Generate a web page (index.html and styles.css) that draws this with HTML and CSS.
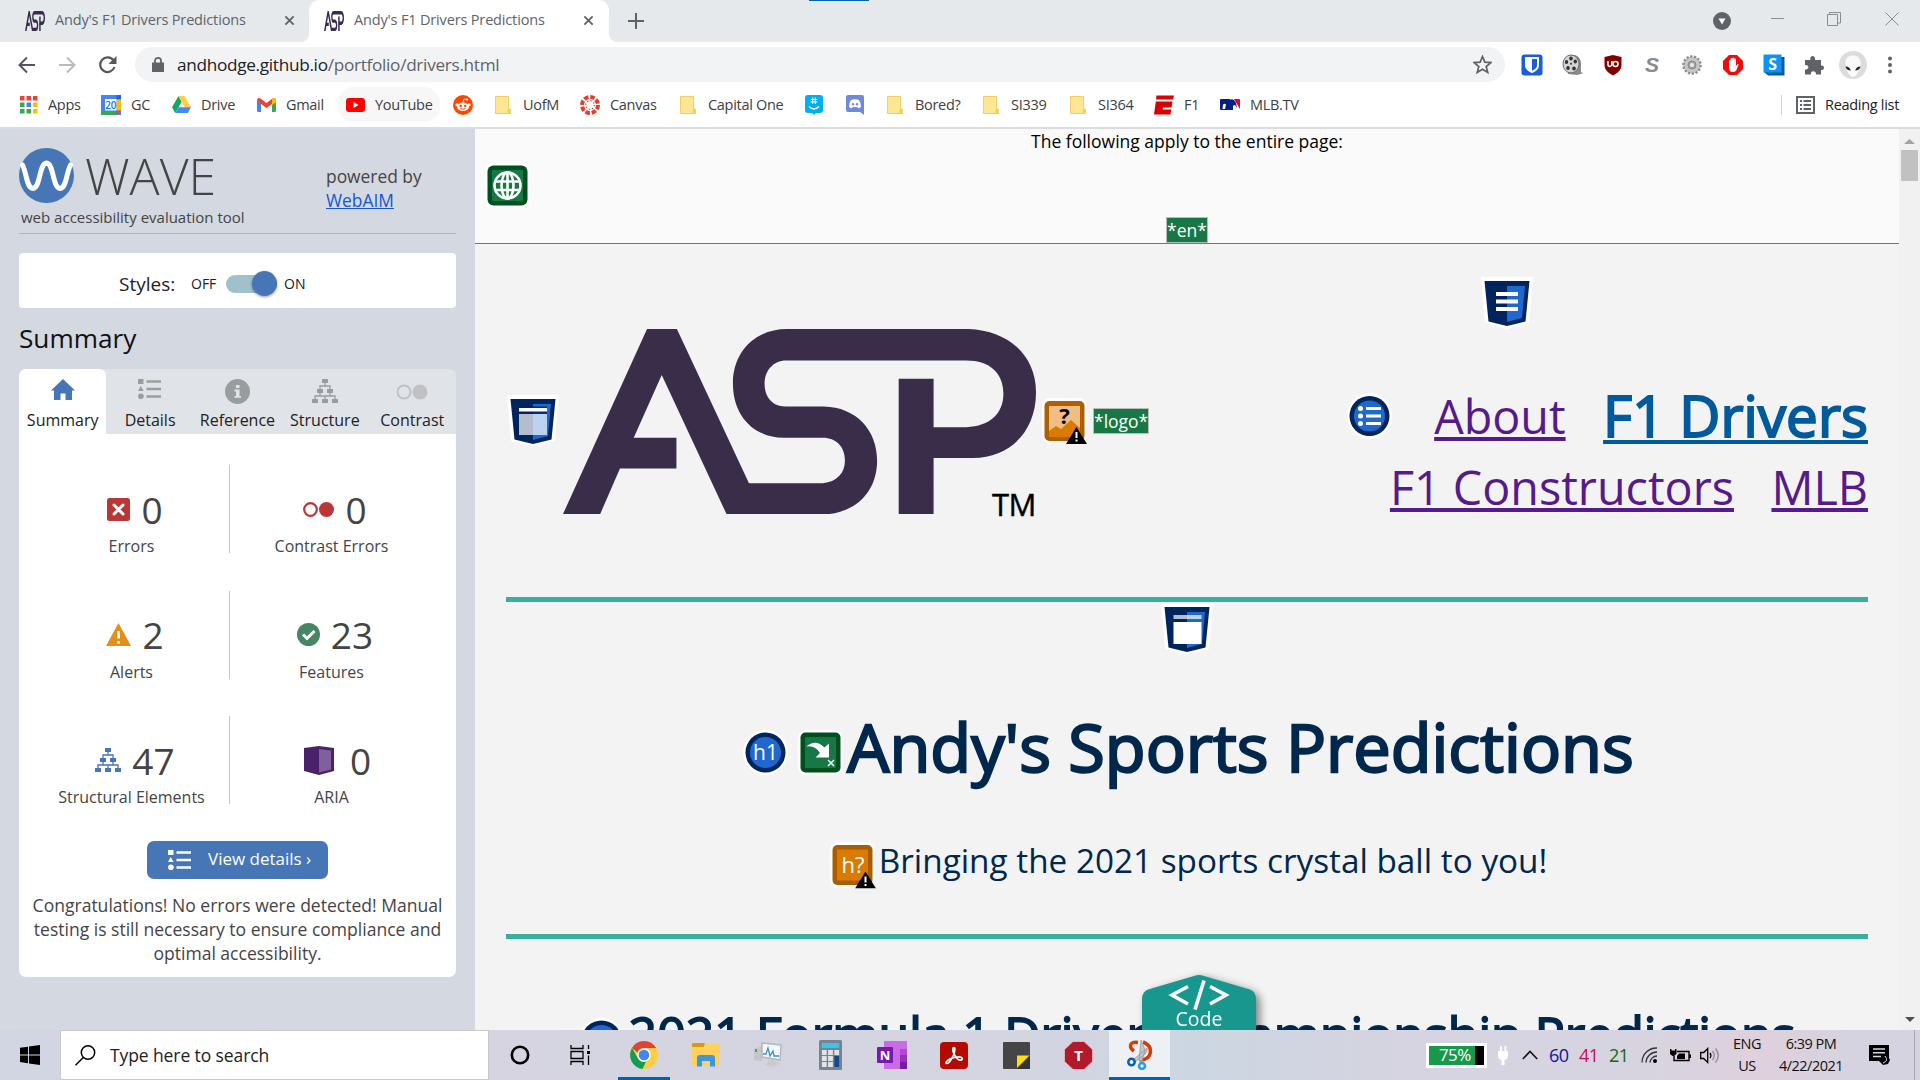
FILE: index.html
```html
<!DOCTYPE html>
<html lang="en">
<head>
<meta charset="utf-8">
<title>Andy's F1 Drivers Predictions</title>
<link rel="stylesheet" href="styles.css">
</head>
<body>
<svg class="defs" width="0" height="0" aria-hidden="true">
  <symbol id="asp" viewBox="202 628 1030 554" preserveAspectRatio="none"><path fill="#392d4a" d="M202 1182L385 628H450L607 1090H768C798 1086 816 1060 816 1022C816 980 796 954 768 954H682C615 952 572 885 572 791C572 697 620 628 690 628H1085C1170 632 1232 705 1232 818C1232 935 1175 1014 1095 1014H1009V1182H933V777H1009V922H1080C1132 920 1161 880 1161 822C1161 760 1132 722 1080 722H688C660 722 641 752 641 792C641 832 658 860 686 860H770C840 862 886 930 886 1022C886 1110 845 1172 782 1182H558L417 766L356 954H449V1046H326L283 1182Z"/></symbol>
  <symbol id="folder" viewBox="0 0 20 20"><path fill="#ffe694" stroke="#f3cf5f" d="M2.500 1.500h13v12l2 1v4h-15z"/><path fill="#f6cf55" d="M15 13l2.500 1v5h-3z"/></symbol>
  <symbol id="list" viewBox="0 0 24 20"><path d="M0 0h5.500v5H0zM2.700 7l3 5H0zM8.500 1.300H23v2.500H8.500zM8.500 8.800H23v2.500H8.500zM8.500 16.300H23v2.500H8.500z"/><circle cx="2.900" cy="17.200" r="2.800"/></symbol>
  <symbol id="tree" viewBox="0 0 26 24"><path d="M10 0h6v4h-6zM5 10h6v4H5zM15 10h6v4h-6zM0 20h6v4H0zM10 20h6v4h-6zM20 20h6v4h-6z"/><path fill="none" stroke="currentColor" stroke-width="1.300" d="M13 4v3M8 10V7h10v3M8 14v3M18 14v3M3 20v-3h20v3M13 17v3"/></symbol>
  <symbol id="shield" viewBox="0 0 52 52"><path fill="#fff" d="M0 0h52l-4 46-22 6-22-6z"/><path fill="#00245d" d="M3.500 4h45l-4 40.500L26 49 7.500 44.500z"/><path fill="#1f69ce" d="M26 9h18l-3 32-15 4z"/></symbol>
  <symbol id="warn" viewBox="0 0 21 17"><path d="M10.500 0L21 17H0z"/><path fill="#fff" d="M9.500 5h2v6h-2zM9.500 12.500h2v2h-2z"/></symbol>
  <symbol id="x" viewBox="0 0 12 12"><path fill="none" stroke="#5f6368" stroke-width="2" d="M1.500 1.500l9 9M10.500 1.500l-9 9"/></symbol>
</svg>

<div class="tabstrip">
  <div class="tab">
    <svg class="fav"><use href="#asp"/></svg><span>Andy's F1 Drivers Predictions</span><svg class="close"><use href="#x"/></svg>
  </div>
  <div class="tab active">
    <svg class="fav"><use href="#asp"/></svg><span>Andy's F1 Drivers Predictions</span><svg class="close"><use href="#x"/></svg>
  </div>
  <svg class="plus" viewBox="0 0 16 16"><path stroke="#5f6368" stroke-width="2" d="M8 0v16M0 8h16"/></svg>
  <div class="winbar"></div>
  <div class="winctl">
    <svg width="18" height="18" viewBox="0 0 18 18"><circle cx="9" cy="9" r="9" fill="#5f6368"/><path fill="#fff" d="M5.500 6.500h7L9 12.500z"/></svg>
    <svg width="14" height="14" viewBox="0 0 14 14"><path stroke="#8b8d90" d="M0 6.500h13"/></svg>
    <svg width="14" height="14" viewBox="0 0 14 14"><path fill="none" stroke="#8b8d90" d="M.5 2.500h10v11H.5zM2.500 2.500v-2h11v10.500h-3"/></svg>
    <svg width="14" height="14" viewBox="0 0 14 14"><path fill="none" stroke="#8b8d90" d="M.5.5l13 13M13.500.5l-13 13"/></svg>
  </div>
</div>

<div class="toolbar">
  <div class="navbtns">
    <svg width="18" height="18" viewBox="0 0 18 18"><path fill="none" stroke="#54585d" stroke-width="2" d="M17 9H2M9 1.500L1.500 9 9 16.500"/></svg>
    <svg width="18" height="18" viewBox="0 0 18 18"><path fill="none" stroke="#b9bbbe" stroke-width="2" d="M1 9h15M9 1.500L16.500 9 9 16.500"/></svg>
    <svg width="19" height="18" viewBox="0 0 19 18"><path fill="none" stroke="#54585d" stroke-width="2.200" d="M15.500 4.500A7.300 7.300 0 1 0 16.500 11"/><path fill="#54585d" d="M18.500 0v8h-8z"/></svg>
  </div>
  <div class="omnibox">
    <svg width="12" height="15" viewBox="0 0 12 15"><path fill="#5f6368" d="M0 5.500h12V15H0z"/><path fill="none" stroke="#5f6368" stroke-width="1.800" d="M3 6V3.500a3 2.600 0 0 1 6 0V6"/></svg>
    <span class="url"><b>andhodge.github.io</b>/portfolio/drivers.html</span>
    <svg class="star" width="19" height="19" viewBox="0 0 19 19"><path fill="none" stroke="#5f6368" stroke-width="1.700" d="M9.500 1.500l2.300 5.600 6 .5-4.600 3.900 1.500 5.900-5.200-3.200-5.200 3.200 1.500-5.900L1.200 7.600l6-.5z"/></svg>
  </div>
  <div class="exts">
    <svg width="22" height="22" viewBox="0 0 22 22"><rect width="21" height="21" x=".5" y=".5" rx="3" fill="#175ddc"/><path fill="#fff" d="M4 3h14v8.500c0 3.500-3.500 6-7 7.500-3.500-1.500-7-4-7-7.500z"/><path fill="#175ddc" d="M11 5h5v6.500c0 2.500-2.500 4-5 5.300z"/></svg>
    <svg width="22" height="22" viewBox="0 0 22 22"><path fill="#8a8a8a" d="M9 1h4q6 2 6 9v8l2 1.500-6 1.500-9-1z"/><ellipse cx="9" cy="10" rx="8" ry="9" fill="#d4d4d4" stroke="#6a6a6a"/><g fill="#333"><ellipse cx="9" cy="4.500" rx="1.800" ry="2"/><ellipse cx="4.500" cy="8" rx="1.700" ry="2"/><ellipse cx="13.300" cy="7.500" rx="1.700" ry="2"/><ellipse cx="6" cy="14" rx="1.800" ry="2"/><ellipse cx="12" cy="14.500" rx="1.800" ry="2"/><circle cx="9" cy="9.800" r="1"/></g></svg>
    <svg width="20" height="22" viewBox="0 0 20 22"><path fill="#800000" d="M10 1l8.500 2v8c0 5-4 8-8.500 10.500C5.500 19 1.500 16 1.500 11V3z"/><path fill="none" stroke="#fff" stroke-width="1.500" d="M5 7v3.500a1.800 1.800 0 0 0 3.800 0V7"/><circle cx="12.500" cy="10" r="2.500" fill="none" stroke="#fff" stroke-width="1.500"/></svg>
    <i class="ext-s">S</i>
    <svg width="22" height="22" viewBox="0 0 22 22"><circle cx="11" cy="11" r="8.500" fill="#bdbdbd" stroke="#8d8d8d" stroke-width="2.600" stroke-dasharray="2.200 1.600"/><circle cx="11" cy="11" r="7.500" fill="#c6c6c6"/><circle cx="11" cy="11" r="4" fill="#a5a5a5" stroke="#888"/><circle cx="11" cy="11" r="2" fill="#eee"/></svg>
    <svg width="22" height="22" viewBox="0 0 22 22"><path fill="#f00b0b" d="M7 1h8l6 6v8l-6 6H7l-6-6V7z"/><path fill="#fff" d="M7 12V6.500q.8-1 1.600 0V10V4.500q.9-1 1.800 0V10V4q.9-1 1.800 0v6V5q.9-1 1.800 0v7l1.500-2q1.500-.3 1 1l-2.500 6q-4 2-6 0-1-2-1-5z"/></svg>
    <svg width="22" height="22" viewBox="0 0 22 22"><path fill="#075a9e" d="M3 3h18.500v18.500H5L1 18z"/><path fill="#0a94f6" d="M.5.500h18v18H.5z"/><text x="9.600" y="15.500" text-anchor="middle" font-size="16" font-weight="700" fill="#fff">S</text></svg>
    <svg width="20" height="22" viewBox="0 0 20 22"><path fill="#5f6368" d="M1 6h5.500C5 1.500 11.500 0 11 6h6v5.500c4-1 4 5.500 0 4.500v4.500h-5c.5-4.500-6-4.500-5 0H1v-5c4.500.5 4.500-5 0-4.500z"/></svg>
    <svg width="28" height="28" viewBox="0 0 28 28"><circle cx="14" cy="14" r="14" fill="#dcdcdc"/><path fill="#fafafa" d="M14 4.500c6 0 8.500 5 7.500 9.500-1 6-4.500 12-7.500 12S7.500 20 6.500 14C5.500 9.500 8 4.500 14 4.500z"/><path fill="#222" d="M6.500 15.500c2.800 0 4.500 1.500 5.300 4-2.800 0-4.800-1.500-5.300-4zM21.500 15.500c-2.800 0-4.500 1.500-5.300 4 2.800 0 4.800-1.500 5.300-4z"/></svg>
    <svg width="6" height="18" viewBox="0 0 6 18"><g fill="#5f6368"><circle cx="3" cy="2.500" r="2"/><circle cx="3" cy="9" r="2"/><circle cx="3" cy="15.500" r="2"/></g></svg>
  </div>
</div>

<div class="bookmarks">
  <div class="bm"><svg width="18" height="18" viewBox="0 0 18 18"><path fill="#ea4335" d="M0 0h4.500v4.500H0zM6.500 0H11v4.500H6.500zM13 0h4.500v4.500H13z"/><path fill="#34a853" d="M0 6.500h4.500V11H0zM0 13h4.500v4.500H0zM6.500 13H11v4.500H6.500z"/><path fill="#4285f4" d="M6.500 6.500H11V11H6.500z"/><path fill="#fbbc04" d="M13 6.500h4.500V11H13zM13 13h4.500v4.500H13z"/></svg><span>Apps</span></div>
  <div class="bm"><svg width="20" height="20" viewBox="0 0 20 20"><path fill="#4285f4" d="M0 0h20v20H0z"/><path fill="#1967d2" d="M15.500 0H20v4.500h-4.500z"/><path fill="#fbbc04" d="M15.500 4.500H20v11h-4.500z"/><path fill="#34a853" d="M0 15.500h15.500V20H0z"/><path fill="#ea4335" d="M15.500 15.500H20L15.500 20z"/><path fill="#fff" d="M4 4h11.500v11.500H4z"/><text x="9.700" y="13.700" text-anchor="middle" font-size="10" fill="#1a73e8" font-weight="600">20</text></svg><span>GC</span></div>
  <div class="bm"><svg width="19" height="17" viewBox="0 0 19 17"><path fill="#11a861" d="M6.500 0L0 11.300 3.200 17 9.700 5.700z"/><path fill="#ffcf4a" d="M6.500 0h6L19 11.300h-6.300z"/><path fill="#4587f4" d="M6.400 11.300H19L15.800 17H3.200z"/></svg><span>Drive</span></div>
  <div class="bm"><svg width="19" height="14" viewBox="0 0 19 14"><path fill="#4285f4" d="M0 2l4 3v9H1.500Q0 14 0 12.500z"/><path fill="#34a853" d="M15 5l4-3v10.500q0 1.500-1.500 1.500H15z"/><path fill="#ea4335" d="M0 2Q.5-1 3.500.5l6 4.500 6-4.500Q18.500-1 19 2L15 6 9.500 10 4 6z"/><path fill="#fbbc04" d="M15 1q3.500-2.500 4 1v2.500L15 7z"/></svg><span>Gmail</span></div>
  <div class="bm hover"><svg width="19" height="14" viewBox="0 0 19 14"><rect width="19" height="14" rx="3" fill="#f00"/><path fill="#fff" d="M7.500 4v6l5-3z"/></svg><span>YouTube</span></div>
  <div class="bm"><svg width="20" height="20" viewBox="0 0 20 20"><circle cx="10" cy="10" r="10" fill="#ff4500"/><ellipse cx="10" cy="11.700" rx="6" ry="4.300" fill="#fff"/><circle cx="3.900" cy="9.800" r="1.500" fill="#fff"/><circle cx="16.100" cy="9.800" r="1.500" fill="#fff"/><path fill="none" stroke="#fff" d="M10 8l1-4 3 .7"/><circle cx="14" cy="4.500" r="1.100" fill="#fff"/><circle cx="7.700" cy="11" r="1.200" fill="#ff4500"/><circle cx="12.300" cy="11" r="1.200" fill="#ff4500"/><path fill="none" stroke="#ff4500" d="M7.500 13.500q2.500 1.600 5 0"/></svg></div>
  <div class="bm"><svg width="20" height="20"><use href="#folder"/></svg><span>UofM</span></div>
  <div class="bm"><svg width="20" height="20" viewBox="0 0 20 20"><circle cx="10" cy="10" r="8" fill="none" stroke="#e43c2e" stroke-width="4" stroke-dasharray="4.500 1.783"/><circle cx="10" cy="10" r="4.300" fill="none" stroke="#e43c2e" stroke-width="1.300" stroke-dasharray="1.200 2.177"/></svg><span>Canvas</span></div>
  <div class="bm"><svg width="20" height="20"><use href="#folder"/></svg><span>Capital One</span></div>
  <div class="bm"><svg width="18" height="20" viewBox="0 0 18 20"><path fill="#00aff0" d="M3 0h12q3 0 3 3v12q0 3-3 3h-4l-2 2-2-2H3q-3 0-3-3V3q0-3 3-3z"/><path fill="none" stroke="#fff" stroke-width="1.500" d="M4 11.500q5 5 10 0"/><path fill="none" stroke="#fff" d="M7.700 2.500v6.500M10.300 2.500v6.500M5.700 4.500h6.600M5.700 7h6.600"/></svg></div>
  <div class="bm"><svg width="18" height="20" viewBox="0 0 18 20"><path fill="#7289da" d="M2 0h14q2 0 2 2v18l-4-3H2q-2 0-2-2V2q0-2 2-2z"/><path fill="#fff" d="M5 5q4-1.500 8 0 2 3 2 7-2 1.500-3 1l-1-1H7l-1 1q-1 .5-3-1 0-4 2-7z"/><circle cx="7" cy="9.300" r="1.200" fill="#7289da"/><circle cx="11" cy="9.300" r="1.200" fill="#7289da"/></svg></div>
  <div class="bm"><svg width="20" height="20"><use href="#folder"/></svg><span>Bored?</span></div>
  <div class="bm"><svg width="20" height="20"><use href="#folder"/></svg><span>SI339</span></div>
  <div class="bm"><svg width="20" height="20"><use href="#folder"/></svg><span>SI364</span></div>
  <div class="bm"><svg width="20" height="20" viewBox="0 0 20 20"><path fill="#d00" d="M2.500.5H20l-1 4H2zM1.800 6.500H18.500l-1 6H9l-.3 2H17.300l-.8 5H0z"/></svg><span>F1</span></div>
  <div class="bm"><svg width="20" height="11" viewBox="0 0 20 11"><path fill="#041e8c" d="M1 0h9L8.500 11H1Q0 11 0 10V1Q0 0 1 0z"/><path fill="#e4002b" d="M14 0h5q1 0 1 1v9l-3-5z"/><path fill="#fff" d="M3 5.500q2-1.500 3 0L5 10H2.500z"/><path fill="#041e8c" d="M8 2q3-3 6-1l2 3 1 5-2-3-2 .5V11H7z"/></svg><span>MLB.TV</span></div>
  <div class="reading"><svg width="19" height="18" viewBox="0 0 19 18"><path fill="none" stroke="#5f6368" stroke-width="2" d="M1 1h17v16H1z"/><path stroke="#5f6368" stroke-width="1.800" d="M4 5h2M7.500 5H15M4 9h2M7.500 9H15M4 13h2M7.500 13H15"/></svg><span>Reading list</span></div>
</div>

<div class="content">
  <aside class="sidebar">
    <header class="brand">
      <div>
        <div class="logo-row">
          <svg width="55" height="55" viewBox="0 0 55 55"><circle cx="27.500" cy="27.500" r="27.500" fill="#4776b6"/><path fill="none" stroke="#fff" stroke-width="5" stroke-linecap="round" d="M3.500 17C8 26 7.500 40 14 40.500 21.500 40 20 15.500 27.500 15 35 15.500 33.500 40 41 40.500 47.500 40 47 26 51.500 17"/></svg>
          <span class="wave">WAVE</span>
        </div>
        <div class="tagline">web accessibility evaluation tool</div>
      </div>
      <p class="powered">powered by<br><a>WebAIM</a></p>
    </header>
    <div class="styles-card"><span class="lbl">Styles:</span><span class="off">OFF</span><span class="toggle"><i></i></span><span>ON</span></div>
    <h2>Summary</h2>
    <nav class="panel-tabs">
      <div class="pt on"><svg width="24" height="21" viewBox="0 0 24 21"><path d="M12 0L0 11.500h3V21h6.500v-6.500h5V21H21v-9.500h3L18 5.700"/></svg>Summary</div>
      <div class="pt"><svg width="24" height="20"><use href="#list"/></svg>Details</div>
      <div class="pt"><svg width="25" height="25" viewBox="0 0 25 25"><circle cx="12.500" cy="12.500" r="12.500"/><path fill="#e0e3e8" d="M11 6h3.500v3H11zM9.500 10.500h5V17H16v1.800H9.500V17H11v-4.500H9.500z"/></svg>Reference</div>
      <div class="pt"><svg width="26" height="24"><use href="#tree"/></svg>Structure</div>
      <div class="pt"><svg class="faint" width="32" height="16" viewBox="0 0 32 16"><circle cx="8" cy="8" r="6.500" fill="none" stroke="currentColor" stroke-width="2"/><circle cx="24" cy="8" r="7.500"/></svg>Contrast</div>
    </nav>
    <section class="panel">
      <div class="counts">
        <div class="count"><div><svg width="23" height="23" viewBox="0 0 23 23"><rect width="23" height="23" rx="2.500" fill="#b93737"/><path stroke="#fff" stroke-width="3" stroke-linecap="round" d="M7 7l9 9M16 7l-9 9"/></svg><b>0</b></div><p>Errors</p></div>
        <div class="count"><div><svg width="31" height="15" viewBox="0 0 31 15"><circle cx="7.500" cy="7.500" r="6.300" fill="none" stroke="#b93737" stroke-width="2.200"/><circle cx="23.500" cy="7.500" r="7.500" fill="#b93737"/></svg><b>0</b></div><p>Contrast Errors</p></div>
        <div class="count"><div><svg width="25" height="23" viewBox="0 0 25 23"><path fill="#e38f18" d="M12.500 0L25 23H0z"/><path fill="#fff" d="M11.300 8h2.600v7.500h-2.600zM11.300 18h2.600v2.600h-2.600z"/></svg><b>2</b></div><p>Alerts</p></div>
        <div class="count"><div><svg width="23" height="23" viewBox="0 0 23 23"><circle cx="11.500" cy="11.500" r="11.500" fill="#468664"/><path fill="none" stroke="#fff" stroke-width="3" d="M6 11.500l4 4L17.500 8"/></svg><b>23</b></div><p>Features</p></div>
        <div class="count"><div><svg class="blue" width="26" height="24"><use href="#tree"/></svg><b>47</b></div><p>Structural Elements</p></div>
        <div class="count aria"><div><svg width="30" height="29" viewBox="0 0 30 29"><path fill="#4a226c" d="M0 2L15 0l15 2v23l-15 4L0 25z"/><path fill="#7f5f9e" d="M15 3l12 1.500v19L15 26.500z"/></svg><b>0</b></div><p>ARIA</p></div>
      </div>
      <a class="btn"><svg width="24" height="20"><use href="#list"/></svg><span>View details ›</span></a>
      <p class="msg">Congratulations! No errors were detected! Manual testing is still necessary to ensure compliance and optimal accessibility.</p>
    </section>
  </aside>

  <main class="page">
    <div class="pagenote">
      <p>The following apply to the entire page:</p>
      <svg width="45" height="45" viewBox="0 0 45 45"><rect width="45" height="45" rx="8" fill="#fff"/><rect x="2.500" y="2.500" width="40" height="40" rx="6" fill="#00501f"/><rect x="7" y="7" width="31" height="31" rx="1" fill="#177845"/><g fill="none" stroke="#fff" stroke-width="2.600"><circle cx="22.500" cy="22.500" r="13"/><ellipse cx="22.500" cy="22.500" rx="6" ry="13"/><path d="M22.500 9.500v26M10.500 18.500h24M10.500 27h24"/></g></svg>
      <span class="tag">*en*</span>
    </div>
    <header class="masthead">
      <svg width="52" height="52" viewBox="0 0 52 52"><use href="#shield"/><path fill="#fff" opacity=".7" d="M12 19h28v21H12z"/><path fill="#00245d" opacity=".85" d="M12 11.500h28V19H12z"/><path fill="#fff" d="M12 13h28v3.500H12z"/></svg>
      <div class="asp"><svg width="473" height="185"><use href="#asp"/></svg><span>TM</span></div>
      <svg class="alt" width="45" height="50" viewBox="0 0 45 50"><rect width="45" height="46" rx="8" fill="#fff"/><rect x="2.500" y="3" width="40" height="40" rx="5" fill="#b05f00"/><path fill="#f0bd84" d="M7 8h31v31H7z"/><path fill="#db7a00" d="M7 33l7-5 5 3 10-9 9 8v9H7z"/><text x="22.500" y="26" font-size="22" font-weight="700" text-anchor="middle">?</text><use href="#warn" x="24" y="29" width="21" height="17"/></svg>
      <span class="tag">*logo*</span>
      <nav class="sitenav">
        <svg class="mark" width="52" height="52" viewBox="0 0 52 52"><use href="#shield"/><path fill="#fff" d="M15 15h22v4H15zM15 22.500h22v4H15zM15 30h22v4H15z"/></svg>
        <div class="navrow">
          <svg width="45" height="46" viewBox="0 0 45 46"><ellipse cx="22.500" cy="23" rx="22.500" ry="23" fill="#fff"/><circle cx="22.500" cy="23" r="20" fill="#00245d"/><circle cx="22.500" cy="23" r="15.500" fill="#1f69ce"/><path stroke="#fff" stroke-width="3" d="M19 15.500h15M19 23h15M19 30.500h15"/><g fill="#fff"><circle cx="13.500" cy="15.500" r="2.500"/><circle cx="13.500" cy="23" r="2.500"/><circle cx="13.500" cy="30.500" r="2.500"/></g></svg>
          <a>About</a><a class="current">F1 Drivers</a>
        </div>
        <div class="navrow two"><a>F1 Constructors</a><a>MLB</a></div>
      </nav>
    </header>
    <section class="hero">
      <svg width="52" height="52" viewBox="0 0 52 52"><use href="#shield"/><path fill="#fff" opacity=".7" d="M12.500 12h28v4h-28z"/><path fill="#fff" d="M12.500 19h28v22h-28z"/></svg>
      <div class="titlerow">
        <svg width="45" height="45" viewBox="0 0 45 45"><circle cx="22.500" cy="22.500" r="22.500" fill="#fff"/><circle cx="22.500" cy="22.500" r="20" fill="#00245d"/><circle cx="22.500" cy="22.500" r="15.500" fill="#1f69ce"/><text x="22.500" y="30" font-size="21" fill="#fff" text-anchor="middle">h1</text></svg>
        <svg width="45" height="45" viewBox="0 0 45 45"><rect width="45" height="45" rx="8" fill="#fff"/><rect x="2.500" y="2.500" width="40" height="40" rx="5" fill="#00501f"/><rect x="7" y="7" width="31" height="31" rx="1" fill="#177845"/><path fill="#fff" d="M8.500 16.500q9-8 18 1l4.500-4v14H17.500l4.500-4.500q-5-8-13.500-6.500z"/><path stroke="#fff" stroke-width="1.500" d="M30 30l6 6M36 30l-6 6"/></svg>
        <h1>Andy's Sports Predictions</h1>
      </div>
      <div class="subrow">
        <svg width="47" height="48" viewBox="0 0 47 48"><rect width="45" height="46" rx="8" fill="#fff"/><rect x="2.500" y="3" width="40" height="40" rx="5" fill="#a95c00"/><rect x="7" y="7.500" width="31" height="31" fill="#db7a00"/><text x="23" y="31" font-size="22" fill="#fff" text-anchor="middle">h?</text><use href="#warn" x="25" y="29.500" width="21" height="17"/></svg>
        <p>Bringing the 2021 sports crystal ball to you!</p>
      </div>
    </section>
    <section class="champ">
      <svg width="45" height="45" viewBox="0 0 45 45"><circle cx="22.500" cy="22.500" r="22.500" fill="#fff"/><circle cx="22.500" cy="22.500" r="20" fill="#00245d"/><circle cx="22.500" cy="22.500" r="15.500" fill="#1f69ce"/></svg>
      <h2>2021 Formula 1 Drivers Championship Predictions</h2>
    </section>
    <div class="code">
      <svg width="130" height="60" viewBox="0 0 130 60"><path fill="#18978f" d="M0 60V24q0-7 6-9.500L52 1q5-2 10 0l46 13.500q6 2.500 6 9.500v36z"/><path fill="none" stroke="#fff" stroke-width="3.600" d="M46 11.500L30 20l16 9M68 11.500L84 20l-16 9M62 5.500l-9 29"/></svg>
      <span>Code</span>
    </div>
  </main>
  <div class="scroll"><svg width="11" height="5" viewBox="0 0 11 5"><path fill="#a3a3a3" d="M5.500 0L11 5H0z"/></svg><div class="thumb"></div><svg class="down" width="10" height="5" viewBox="0 0 10 5"><path fill="#505050" d="M0 0h10L5 5z"/></svg></div>
</div>

<footer class="taskbar">
  <div class="start"><svg width="20" height="20" viewBox="0 0 20 20"><path d="M0 2.800l8-1.100v7.800H0zM9 1.500L20 0v9.500H9zM0 10.500h8v7.700l-8-1.100zM9 10.500h11V20L9 18.400z"/></svg></div>
  <div class="search"><svg width="21" height="21" viewBox="0 0 21 21"><circle cx="13" cy="7.500" r="6.700" fill="none" stroke="#000" stroke-width="1.500"/><path stroke="#000" stroke-width="1.500" d="M8.300 12.500L.5 20.300"/></svg><span>Type here to search</span></div>
  <div class="apps">
    <div><svg width="20" height="20" viewBox="0 0 20 20"><circle cx="10" cy="10" r="8.200" fill="none" stroke="#000" stroke-width="2.600"/></svg></div>
    <div class="views"><svg width="21" height="20" viewBox="0 0 21 20"><path fill="none" stroke="#000" stroke-width="1.300" d="M1 0v3.500h12V0M1 20v-3.500h12V20M1 6.500h12v7H1zM18.500 0v4M18.500 10.500V20"/><path d="M17 6h3v3h-3z"/></svg></div>
    <div class="run"><svg width="28" height="28" viewBox="0 0 28 28"><circle cx="14" cy="14" r="14" fill="#ffcd40"/><path fill="#db4437" d="M14 0a14 14 0 0 1 12.100 7H14a7 7 0 0 0-6.500 4.500L2 7A14 14 0 0 1 14 0z"/><path fill="#0f9d58" d="M2 7l6 10.500A7 7 0 0 0 16 20.500L12.500 28A14 14 0 0 1 2 7z"/><circle cx="14" cy="14" r="6.700" fill="#fff"/><circle cx="14" cy="14" r="5.300" fill="#4285f4"/></svg></div>
    <div><svg width="28" height="24" viewBox="0 0 28 24"><path fill="#d99a12" d="M0 1q0-1 1-1h11l1 1-1 3H0z"/><path fill="#ffd15c" d="M0 4h12l1-3h14.500v21.500H0z"/><path fill="#3d97dd" d="M5 23.500V15q0-3 3-3h12q3 0 3 3v8.500h-5V18h-8v5.500z"/></svg></div>
    <div><svg width="28" height="26" viewBox="0 0 28 26"><path fill="#c3c7ca" d="M0 7l8-3v15l-8-1z"/><path fill="#4aa354" d="M1 7h2v3H1z"/><path fill="#f4f7f8" stroke="#b3b8bc" stroke-width="1.500" d="M8 1L27 3l-1 15-18-3z"/><path fill="none" stroke="#3b91c8" stroke-width="1.300" d="M9 12h3l2-6 2 8 3-5 1 5h5"/><path fill="#c9cccd" d="M14 17l7 1 1 2 5 1-8 4-9-2 4-2z"/></svg></div>
    <div><svg width="23" height="30" viewBox="0 0 24 30" preserveAspectRatio="none"><rect width="24" height="30" rx="1.500" fill="#79838d"/><path fill="#35c6f2" d="M3 3h18v5H3z"/><path fill="#e1e5e8" d="M3 10h5v5H3zM9.500 10h5v5h-5zM16 10h5v5h-5zM3 16h5v5H3zM9.500 16h5v5h-5zM3 22h5v5H3zM9.500 22h5v5h-5z"/><path fill="#0f4a8c" d="M16 16h5v11h-5z"/></svg></div>
    <div><svg width="30" height="28" viewBox="0 0 30 28"><path fill="#cb6ce6" d="M7 0h16v28H7z"/><path fill="#ae4bd5" d="M23 0h7v28h-7z"/><path fill="#7719aa" d="M23 21h7v7h-7z"/><path fill="#9332bf" d="M23 14h7v7h-7z"/><path fill="#cb6ce6" d="M23 0h7v8h-7z"/><rect y="6" width="16" height="16" rx="1" fill="#7719aa"/><text x="8" y="18.500" font-size="13" font-weight="700" text-anchor="middle" fill="#fff">N</text></svg></div>
    <div><svg width="28" height="27" viewBox="0 0 28 27"><rect width="28" height="27" rx="4" fill="#b30b00"/><path fill="none" stroke="#fff" stroke-width="1.700" d="M14 5.500c-3 0 0 8 3 11s6 1.500 5-.5-8-1-12 1-5 4.500-3 4.500S14 14 14.500 10s.5-4.500-.5-4.500z"/></svg></div>
    <div><svg width="27" height="27" viewBox="0 0 27 27"><rect width="27" height="27" rx="1" fill="#454545"/><path fill="#ffde00" d="M14 26V13.500h12.500z"/><path fill="#333" d="M27 14v13H14z"/></svg></div>
    <div><svg width="29" height="29" viewBox="0 0 29 29"><path fill="#b11a2b" stroke="#e4c3ca" stroke-width=".8" d="M9 .5h11l8.500 8v12l-8.500 8H9l-8.500-8v-12z"/><text x="14.500" y="20" font-size="15" font-weight="700" text-anchor="middle" fill="#fff">T</text></svg></div>
    <div class="run current"><svg width="26" height="30" viewBox="0 0 26 30"><path fill="none" stroke="#d83b01" stroke-width="3.500" d="M11 2.500Q4 1.500 3.500 5.500 3 8 7 11M16 2q8 3 7.500 10-1 8-11 8"/><path fill="#c3c6c8" stroke="#8d9194" stroke-width=".7" d="M14 0l4 10-3 11-3-1zM20 8q1 4-3 7L8 22l-2-2z"/><circle cx="4.500" cy="22" r="3.200" fill="none" stroke="#0b5fb8" stroke-width="2.500"/><circle cx="15" cy="26" r="3" fill="none" stroke="#2a9be6" stroke-width="2.500"/></svg></div>
  </div>
  <div class="tray">
    <div class="batt"><span>75%</span></div>
    <svg class="plug" width="10" height="19" viewBox="0 0 10 19"><path fill="#fff" d="M2 0h1.800v5h2.700V0h1.800v5H10v5q0 3.500-3.500 4v5h-3v-5Q0 13.500 0 10V5h2z"/></svg>
    <svg class="chev" width="16" height="10" viewBox="0 0 16 10"><path fill="none" stroke="#111" stroke-width="1.600" d="M.8 9L8 1.500 15.200 9"/></svg>
    <span class="n n1">60</span><span class="n n2">41</span><span class="n n3">21</span>
    <svg class="wifi" width="17" height="16" viewBox="0 0 17 16"><g fill="none" stroke="#333" stroke-width="1.300"><path d="M1 15.500A14.500 14.500 0 0 1 16 1"/><path d="M5 15.500A11 11 0 0 1 16 5"/><path d="M9 15.500A7 7 0 0 1 16 9"/></g><circle cx="14" cy="14" r="2"/></svg>
    <svg class="pw" width="21" height="15" viewBox="0 0 21 15"><path fill="none" stroke="#000" stroke-width="1.400" d="M7 3.500h12v9H4V8"/><path d="M9 5.500h6v5.500H7V8zM19 6.500h2v3.500h-2zM0 1h1.500v2H0zM5 1h1.500v2H5zM0 2.500h6.500V6L4 8H2.500L0 6z"/></svg>
    <svg class="snd" width="21" height="17" viewBox="0 0 21 17"><path fill="none" stroke="#000" stroke-width="1.300" d="M.7 5.500h3l4-4v14l-4-4h-3z"/><path fill="none" stroke="#000" stroke-width="1.300" d="M10 6q1.800 2.500 0 5"/><path fill="none" stroke="#8d8b96" stroke-width="1.300" d="M12.500 4q3.500 4.500 0 9M15.500 1.500q5.500 7 0 14"/></svg>
    <p class="lang">ENG<br>US</p>
    <p class="clock">6:39 PM<br>4/22/2021</p>
    <svg class="note" width="21" height="20" viewBox="0 0 21 20"><path d="M0 0h20v13l1 2-2 4-5 1-4-4H0z"/><path stroke="#dcd4e0" stroke-width="1.600" d="M4 4h12M4 7.800h12M4 11.500h8"/><path fill="none" stroke="#dcd4e0" d="M16 11q4 5-2 7"/></svg>
  </div>
</footer>
</body>
</html>
```
FILE: styles.css
```css
* { box-sizing: border-box; }
body { margin: 0; width: 1920px; height: 1080px; overflow: hidden; background: #fff; font-family: "Open Sans", "Noto Sans", sans-serif; color: #000; display: flex; flex-direction: column; }
p, h1, h2 { margin: 0; font-weight: 400; }
svg { display: block; flex: none; }
.defs { position: absolute; }

/* browser tabs */
.tabstrip { height: 42px; flex: none; background: #e5e9ec; display: flex; align-items: center; }
.tab { width: 300px; height: 42px; display: flex; align-items: center; color: #5f6368; font-size: 14.500px; letter-spacing: -.16px; white-space: nowrap; position: relative; padding: 0 0 1px 15px; }
.tab:first-child { margin-left: 10px; width: 299px; }
.tab.active { background: #fff; border-radius: 10px 10px 0 0; }
.tab.active::before, .tab.active::after { content: ""; position: absolute; bottom: 0; width: 9px; height: 9px; }
.tab.active::before { left: -9px; background: radial-gradient(circle at 0 0, transparent 9px, #fff 9.500px); }
.tab.active::after { right: -9px; background: radial-gradient(circle at 100% 0, transparent 9px, #fff 9.500px); }
.fav { width: 20px; height: 20px; margin-right: 10px; }
.tab span { width: 229px; line-height: 20px; margin-bottom: 1px; }
.close { width: 11px; height: 11px; }
.plus { width: 16px; height: 16px; margin-left: 19px; }
.winbar { align-self: flex-start; width: 301px; height: 1px; margin-left: 165px; background: linear-gradient(90deg, #0063b1 60px, #e9e6e6 60px); }
.winctl { display: flex; margin-left: 603px; align-items: center; height: 42px; }
.winctl svg:nth-child(n+2) { margin-bottom: 5px; }
.winctl svg:nth-child(2) { margin-left: 40px; }
.winctl svg:nth-child(3) { margin-left: 42px; }
.winctl svg:nth-child(4) { margin-left: 44px; }

/* address bar */
.toolbar { height: 45px; flex: none; display: flex; align-items: center; padding-left: 18px; }
.navbtns { display: flex; gap: 22px; width: 117px; }
.omnibox { width: 1370px; height: 35px; border-radius: 18px; background: #f1f3f4; display: flex; align-items: center; padding: 0 13px 0 17px; }
.url { flex: 1; margin-left: 13px; font-size: 17.200px; letter-spacing: -.3px; color: #5f6368; }
.url b { font-weight: 400; color: #202124; }
.exts { display: flex; align-items: center; margin-left: 16px; gap: 19px; }
.ext-s { font: italic 700 21px/26px "Liberation Sans", sans-serif; color: #8a8a8a; width: 20px; text-align: center; }
.exts svg:nth-child(9) { margin: 0 1px 0 -4px; }

/* bookmarks */
.bookmarks { height: 42px; flex: none; border-bottom: 2px solid #dadce0; padding: 0 0 5px 20px; display: grid; grid-template-columns: 81px 71px 85px 81px 115px 40px 87px 98px 127px 41px 39px 96px 87px 86px 66px 561px auto; align-items: center; font-size: 14.500px; letter-spacing: -.3px; color: #3c4043; white-space: nowrap; }
.bm { display: flex; align-items: center; gap: 10px; height: 35px; }
.bm.hover { background: #f7f7f7; border-radius: 16px; width: 102px; padding-left: 8px; }
.reading { display: flex; align-items: center; gap: 10px; border-left: 1px solid #d0d2d5; height: 20px; padding-left: 14px; color: #202124; }

.content { flex: 1; display: flex; min-height: 0; }

/* evaluation panel */
.sidebar { width: 475px; background: #d4d8e0; padding: 19px 19px 0; color: #444; flex: none; }
.brand { display: flex; height: 86px; border-bottom: 1px solid #b2b5b7; margin-bottom: 19px; }
.brand > div { width: 307px; }
.logo-row { display: flex; height: 55px; align-items: center; }
.wave { font-size: 50px; font-weight: 300; margin-left: 11px; line-height: 50px; }
.tagline { font-size: 15px; line-height: 20px; padding-left: 2px; margin-top: 4px; }
.powered { font-size: 17.400px; line-height: 24px; padding-top: 16px; }
.powered a { color: #1558d0; text-decoration: underline; }
.styles-card { height: 55px; background: #fff; border-radius: 4px; display: flex; align-items: center; padding: 6px 0 0 100px; font-size: 14px; color: #222; }
.styles-card .lbl { font-size: 19px; width: 72px; }
.off { width: 35px; }
.toggle { width: 51px; height: 18px; border-radius: 9px; background: #a0c1cc; margin-right: 7px; display: flex; justify-content: flex-end; align-items: center; }
.toggle i { width: 25px; height: 25px; border-radius: 50%; background: #4776b6; box-shadow: 0 1px 3px #0006; flex: none; }
.sidebar h2 { font-size: 26.200px; line-height: 36px; margin: 12px 0 13px; color: #111; }
.panel-tabs { display: flex; height: 65px; background: #e0e3e8; border-radius: 7px 7px 0 0; font-size: 16px; color: #222; }
.pt { width: 87.400px; display: flex; flex-direction: column; align-items: center; justify-content: space-between; line-height: 28px; padding-top: 10px; }
.pt svg { fill: #9a9da0; color: #9a9da0; }
.pt svg.faint { fill: #bfc1c5; color: #bfc1c5; margin-top: 5px; }
.pt.on { background: #fff; border-radius: 7px 7px 0 0; }
.pt.on svg { fill: #4776b6; }
.panel { height: 543px; background: #fff; border-radius: 0 0 7px 7px; padding-top: 31px; }
.counts { display: grid; grid-template-columns: 211px 189px; grid-auto-rows: 88px; row-gap: 37.500px; margin-bottom: 37px; }
.count { display: flex; flex-direction: column; align-items: center; padding-top: 22px; }
.count:nth-child(odd) { border-right: 1px solid #c4c4c4; padding-left: 15px; }
.count:nth-child(even) { padding-left: 14px; }
.count div { display: flex; align-items: center; height: 44px; gap: 11px; margin-left: 7px; }
.count b { font-weight: 400; font-size: 37px; line-height: 44px; padding-top: 1px; }
.count.aria div { gap: 16px; margin-left: 12px; }
.count p { font-size: 16px; line-height: 26px; white-space: nowrap; margin-top: 2px; }
.blue { fill: #4776b6; color: #4776b6; }
.btn { display: flex; align-items: center; width: 181px; height: 38px; margin: 0 auto; border-radius: 7px; background: #4776b6; color: #fff; font-size: 17px; padding-left: 21px; gap: 16px; white-space: nowrap; }
.btn svg { fill: #fff; }
.btn span { line-height: 24px; margin-bottom: 2px; }
.msg { font-size: 17.550px; line-height: 24px; text-align: center; margin: 14px 6px 0; }

/* evaluated page */
.page { width: 1424px; background: #f3f3f3; overflow: hidden; position: relative; color: #00274c; flex: none; }
.pagenote { height: 115px; background: #fafafa; border-bottom: 1px solid #6b7b6b; text-align: center; color: #000; display: flex; flex-direction: column; align-items: center; }
.pagenote p { font-size: 17.500px; line-height: 24px; height: 24px; }
.pagenote svg { align-self: flex-start; margin: 10px 0 9px 10px; }
.tag { background: #177845; color: #fff; border: 1px solid #bbb; font-size: 17.500px; line-height: 24px; height: 26px; white-space: nowrap; }
.masthead { margin: 0 31px; height: 358px; border-bottom: 5px solid #38b09d; display: flex; align-items: center; }
.masthead > svg:first-child { margin-left: 1px; }
.asp { margin: 2px 0 0 4px; position: relative; }
.asp span { position: absolute; right: 0; bottom: -8px; font: 31px/36px "Open Sans", sans-serif; color: #000; letter-spacing: -.5px; -webkit-text-stroke: .4px #000; }
.alt { margin: 4px 6px 0; }
.sitenav { margin-left: auto; width: 720px; height: 353px; display: flex; flex-direction: column; align-items: center; padding-top: 33px; }
.mark { margin-right: 3px; }
.navrow { align-self: flex-end; display: flex; align-items: center; height: 78px; margin-top: 48px; gap: 37.500px; font-size: 46.700px; line-height: 78px; color: #551a8b; }
.navrow svg { margin: 0 5px 0 0; }
.navrow a { text-decoration: underline; text-decoration-thickness: 4px; text-underline-offset: 3px; white-space: nowrap; text-decoration-skip-ink: none; }
.navrow .current { color: #005a9c; font-size: 56.600px; -webkit-text-stroke: 2px #005a9c; text-decoration-thickness: 4px; }
.navrow.two { margin-top: -7.500px; }
.hero { margin: 0 31px; height: 337px; border-bottom: 5px solid #38b09d; display: flex; flex-direction: column; align-items: center; padding-top: 1px; }
.titlerow { display: flex; align-items: center; height: 96px; margin: 44px 0 0 3px; }
.titlerow svg { margin: 10px 10px 0 0; }
.titlerow svg + svg { margin-right: 4px; }
h1 { font-size: 66.700px; line-height: 96px; -webkit-text-stroke: 2.300px #00274c; white-space: nowrap; }
.subrow { display: flex; height: 50px; margin-top: 44px; align-items: center; padding-left: 3px; }
.subrow svg { margin-top: 4px; }
.subrow p { font-size: 33.300px; line-height: 46px; white-space: nowrap; margin: -8px 0 0 2px; }
.champ { display: flex; justify-content: center; margin-top: 60px; }
.champ svg { margin: 19px 5px 0 0; }
.champ h2 { font-size: 50px; line-height: 70px; -webkit-text-stroke: 1.800px #00274c; white-space: nowrap; }
.code { position: absolute; left: 667px; bottom: 0; height: 55px; width: 130px; color: #fff; filter: drop-shadow(4px 3px 4px #0007); overflow: visible; }
.code svg { position: absolute; left: 0; top: 0; }
.code span { position: absolute; left: 0; width: 114px; top: 31px; text-align: center; font-size: 19.500px; line-height: 26px; }
.scroll { width: 21px; background: #f1f1f1; display: flex; flex-direction: column; align-items: center; padding: 10px 0 8px; }
.thumb { width: 17px; height: 31px; background: #c1c1c1; margin-top: 6px; }
.down { margin-top: auto; }

/* taskbar */
.taskbar { height: 50px; flex: none; display: flex; background: linear-gradient(90deg, #d2d6e2 0, #d5d4e0 480px, #d4d5e1 1000px, #ccd6e2 1200px, #d5d4e0 1400px, #d7d4e0 1650px, #dfd0dd 1760px, #d5d3df 1850px); }
.start { width: 60px; display: flex; align-items: center; justify-content: center; }
.search { width: 429px; background: #fff; border: 1px solid #c8c8c8; display: flex; align-items: center; padding-left: 14px; font-size: 17.500px; color: #222; }
.search span { margin-left: 14px; letter-spacing: -.1px; }
.apps { display: flex; width: 682px; }
.apps div { width: 62px; display: flex; align-items: center; justify-content: center; }
.apps div.views { padding-right: 4px; }
.apps div.run { border-bottom: 3px solid #0063b1; padding-top: 3px; width: 52px; margin: 0 5px; }
.apps div.current { background: #edf0f5; width: 61px; margin: 0; }
.tray { display: flex; align-items: center; margin-left: 255px; white-space: nowrap; width: 489px; border-right: 1px solid #a9a7b3; }
.batt { width: 61px; height: 25px; border: 3px solid #fff; background: linear-gradient(90deg, #16994b 46px, #000 46px); color: #fff; font-size: 17px; line-height: 18px; padding-left: 10px; letter-spacing: -.6px; }
.plug { margin-left: 11px; }
.chev { margin-left: 14px; }
.n { font-size: 18px; width: 30px; letter-spacing: -.6px; }
.n1 { color: #12129c; margin-left: 11px; }
.n2 { color: #c80a63; }
.n3 { color: #0c6a0c; }
.wifi { margin-left: 2px; }
.pw { margin-left: 12px; }
.snd { margin-left: 9px; }
.lang, .clock { font-size: 14.500px; line-height: 22px; text-align: center; letter-spacing: -.5px; color: #111; }
.lang { width: 28px; margin-left: 12px; }
.clock { width: 68px; margin-left: 16px; }
.note { margin-left: 24px; }
```
